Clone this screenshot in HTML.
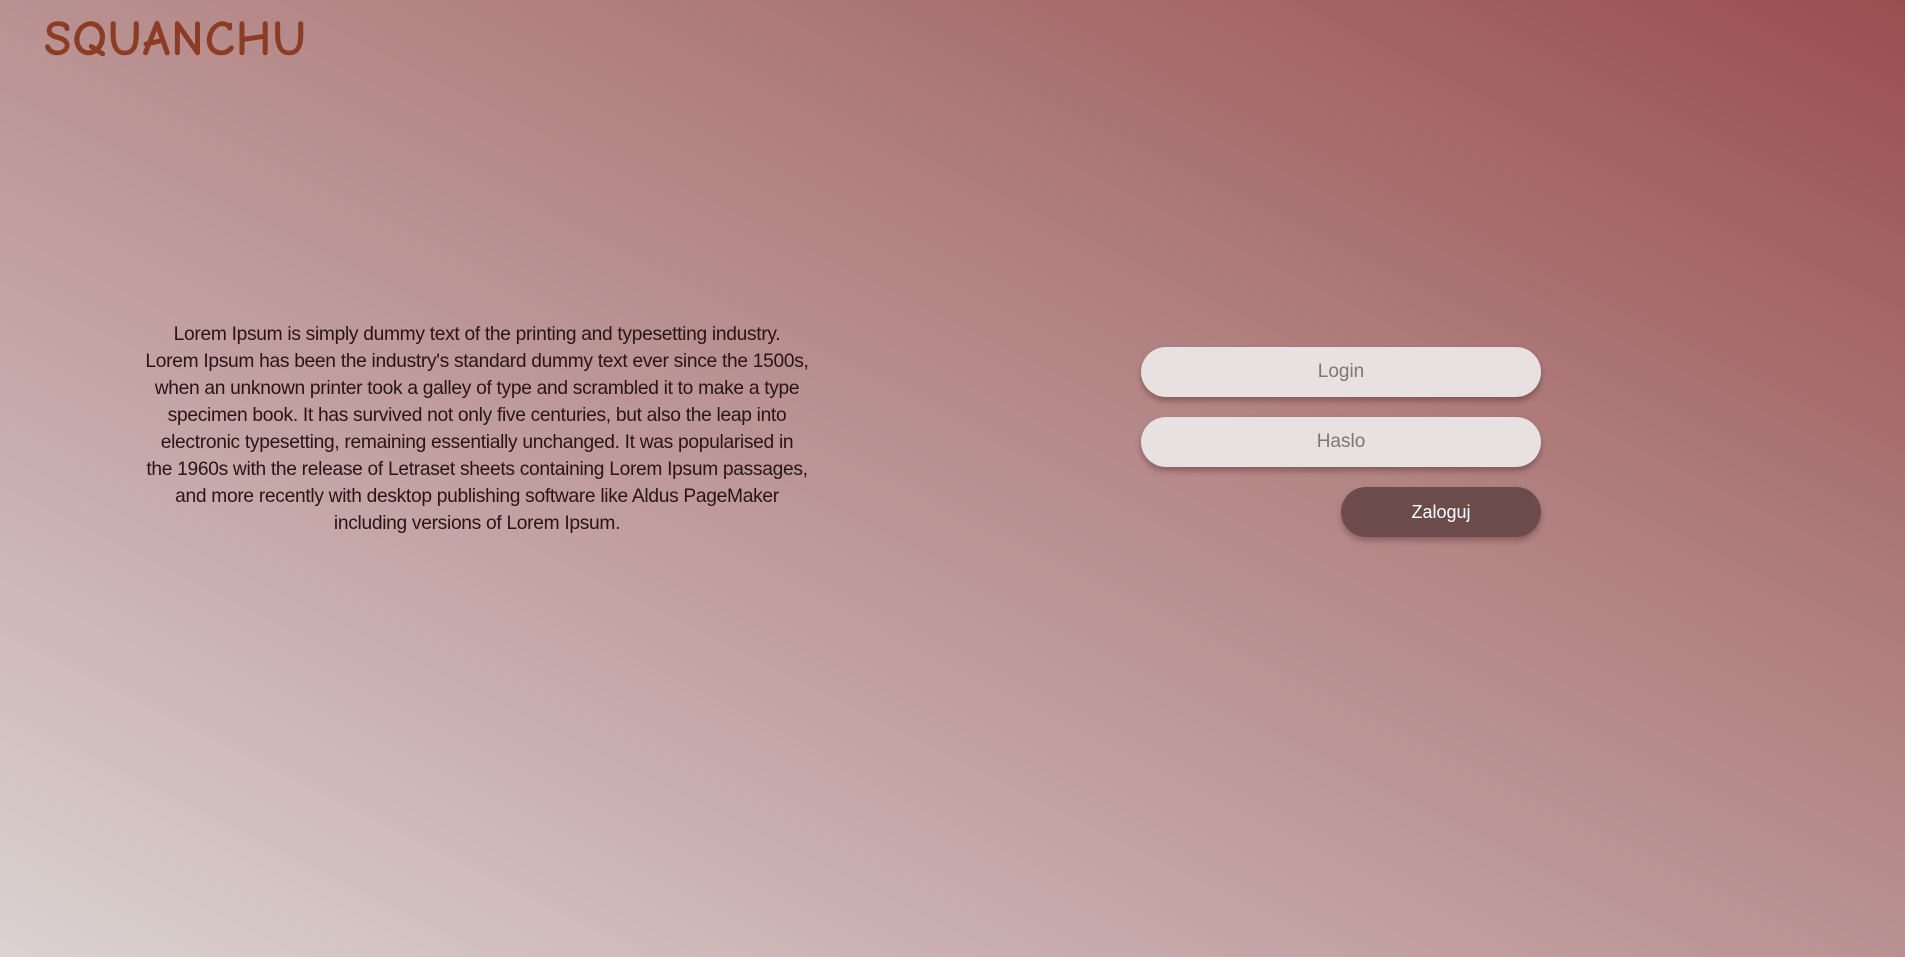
<!DOCTYPE html>
<html><head><meta charset="utf-8"><style>
html,body{margin:0;width:1905px;height:957px;overflow:hidden}
body{background:linear-gradient(to top right,#dbd2d1 0%,#c3a3a4 35%,#b07f7f 65%,#9a4e50 100%);font-family:"Liberation Sans Narrow","Liberation Sans",sans-serif;position:relative}
.logo{position:absolute;left:44px;top:10px;font-family:"Comic Sans MS","Comic Neue",cursive;font-size:50px;color:#8b3c22;letter-spacing:1px;font-weight:bold}
.txt{position:absolute;left:132px;top:321px;width:690px;text-align:center;font-size:19.2px;letter-spacing:-0.3px;line-height:27px;color:#2a1414}
.in{position:absolute;left:1141px;width:400px;height:50px;border-radius:25px;background:#e8e1e1;box-shadow:0 4px 6px rgba(60,20,20,.35);text-align:center;line-height:50px;font-size:19px;color:#7e7676}
.btn{position:absolute;left:1341px;top:487px;width:200px;height:50px;border-radius:25px;background:#6b4b4c;box-shadow:0 4px 6px rgba(60,20,20,.3);text-align:center;line-height:50px;font-size:18px;color:#fff}
</style></head><body>
<div class="logo">SQUANCHU</div>
<div class="txt">Lorem Ipsum is simply dummy text of the printing and typesetting industry.<br>Lorem Ipsum has been the industry's standard dummy text ever since the 1500s,<br>when an unknown printer took a galley of type and scrambled it to make a type<br>specimen book. It has survived not only five centuries, but also the leap into<br>electronic typesetting, remaining essentially unchanged. It was popularised in<br>the 1960s with the release of Letraset sheets containing Lorem Ipsum passages,<br>and more recently with desktop publishing software like Aldus PageMaker<br>including versions of Lorem Ipsum.</div>
<div class="in" style="top:347px">Login</div>
<div class="in" style="top:417px">Haslo</div>
<div class="btn">Zaloguj</div>
</body></html>
